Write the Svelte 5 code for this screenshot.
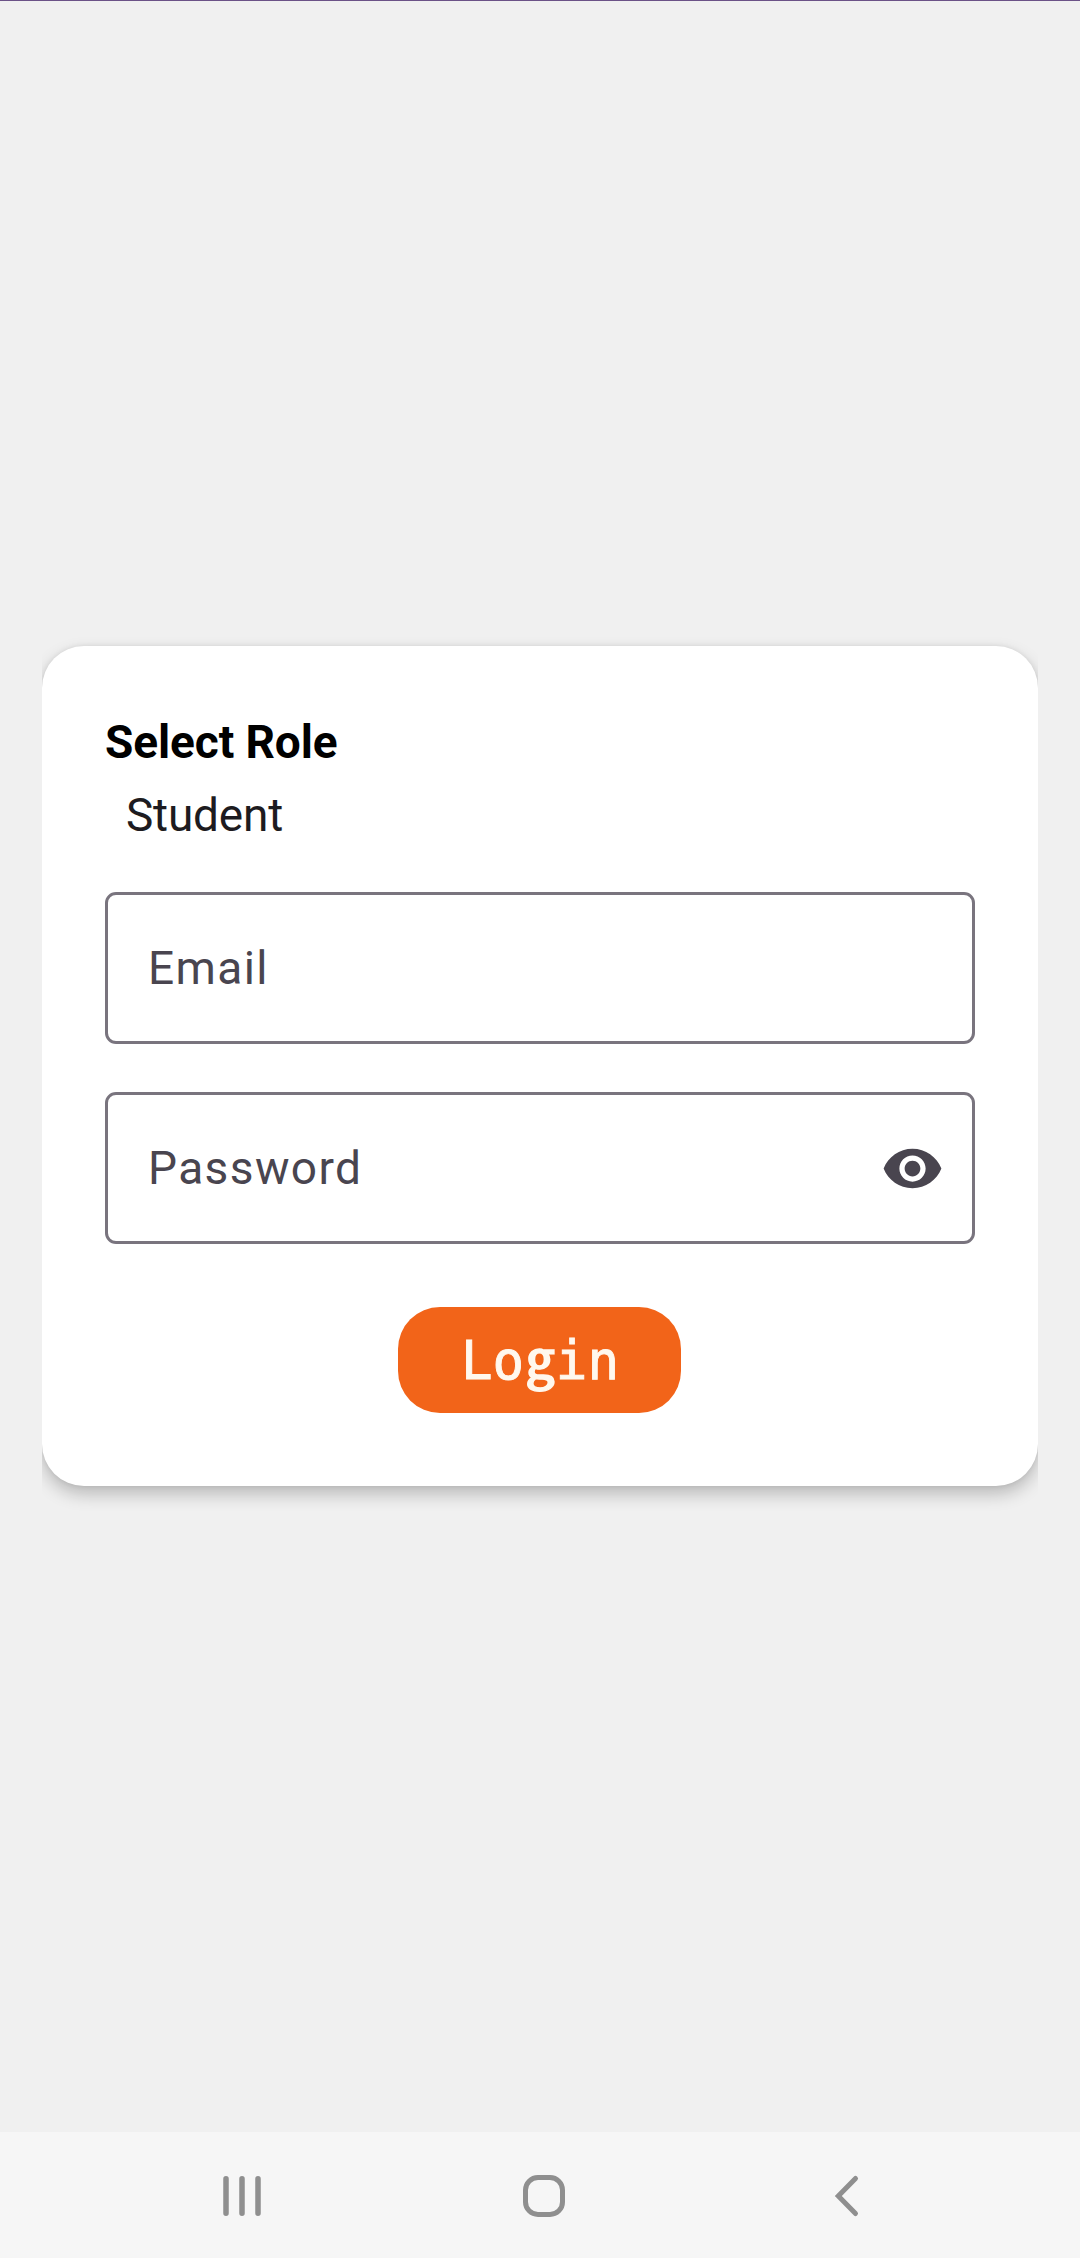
<script>
  let email = $state('');
  let password = $state('');
  let visible = $state(false);
</script>

<div class="screen">
  <main>
    <form class="card" onsubmit={(e) => e.preventDefault()}>
      <h1>Select Role</h1>
      <div class="role">Student</div>
      <label class="field">
        <input type="text" placeholder="Email" bind:value={email} />
      </label>
      <div class="field">
        <input type={visible ? 'text' : 'password'} placeholder="Password" bind:value={password} />
        <button class="eye" type="button" aria-label="Show password" onclick={() => (visible = !visible)}>
          <svg viewBox="0 0 24 24" width="63" height="63">
            <path fill="#49454f" d="M12 4.5C7 4.5 2.73 7.61 1 12c1.73 4.39 6 7.5 11 7.5s9.27-3.11 11-7.5c-1.73-4.39-6-7.5-11-7.5zM12 17c-2.76 0-5-2.24-5-5s2.24-5 5-5 5 2.24 5 5-2.24 5-5 5zm0-8c-1.66 0-3 1.34-3 3s1.34 3 3 3 3-1.34 3-3-1.34-3-3-3z" />
          </svg>
        </button>
      </div>
      <button class="login" type="submit">Lo<span class="g">g</span>in</button>
    </form>
  </main>

  <nav>
    <svg viewBox="0 0 48 48" width="48" height="48">
      <path d="M8 6.8v34.4M24 6.8v34.4M40 6.8v34.4" stroke-width="5.5" />
    </svg>
    <svg viewBox="0 0 48 48" width="48" height="48">
      <rect x="5.5" y="5.5" width="37" height="37" rx="12.5" stroke-width="5" />
    </svg>
    <svg viewBox="0 0 48 48" width="48" height="48">
      <path d="M32.5 6.5L15.3 24l17.2 17.5" stroke-width="5" stroke-linejoin="miter" />
    </svg>
  </nav>
</div>

<style>
  :global(body) {
    margin: 0;
  }
  .screen {
    box-sizing: border-box;
    height: 2258px;
    display: flex;
    flex-direction: column;
    background: linear-gradient(#6b5287 0 1px, #f0f0f0 1px);
    font-family: Roboto, sans-serif;
    font-size: 46px;
  }
  main {
    flex: 1;
    display: flex;
    align-items: center;
    padding: 0 42px;
  }
  .card {
    box-sizing: border-box;
    width: 100%;
    height: 840px;
    padding: 63px;
    display: flex;
    flex-direction: column;
    background: #fff;
    border-radius: 42px;
    box-shadow: 0 8px 17px rgba(0, 0, 0, 0.23), 0 0 5px rgba(0, 0, 0, 0.08);
    clip-path: inset(-50px 0);
  }
  h1 {
    margin: 0;
    font-size: inherit;
    font-weight: 700;
    line-height: 66px;
    letter-spacing: -0.1px;
    color: #000;
  }
  .role {
    padding-left: 21px;
    margin-bottom: 37px;
    line-height: 80px;
    letter-spacing: -0.2px;
    color: #1d1b20;
  }
  .field {
    box-sizing: border-box;
    height: 152px;
    margin-bottom: 48px;
    padding: 0 28px 0 40px;
    display: flex;
    align-items: center;
    border: 3px solid #79747e;
    border-radius: 11px;
  }
  input {
    flex: 1;
    min-width: 0;
    padding: 0;
    border: 0;
    outline: 0;
    background: none;
    font: inherit;
    letter-spacing: 1.4px;
    color: #1d1b20;
  }
  input::placeholder {
    color: #49454f;
    opacity: 1;
  }
  button {
    border: 0;
    padding: 0;
  }
  .eye {
    display: flex;
    background: none;
  }
  .login {
    box-sizing: border-box;
    align-self: center;
    width: 283px;
    height: 106px;
    margin: 15px 1px 0 0;
    padding: 2px 0 0 1px;
    border-radius: 42px;
    background: #f26419;
    color: #fff8ee;
    font: 400 52.5px/104px 'DejaVu Sans Mono', monospace;
    -webkit-text-stroke: 0.9px #fff8ee;
  }
  /* Double-storey g, widened to the pitch of its neighbours */
  .g {
    display: inline-block;
    width: 26.2px;
    margin: 0 2.7px;
    line-height: 1;
    font-family: 'Noto Sans Mono CJK SC', monospace;
    transform: scaleX(1.17);
    -webkit-text-stroke-width: 1.4px;
  }
  nav {
    height: 126px;
    box-sizing: border-box;
    padding: 0 82px 0 91px;
    display: grid;
    grid-template-columns: repeat(3, 1fr);
    align-items: center;
    justify-items: center;
    background: #f6f6f6;
  }
  nav svg {
    margin-top: 2px;
    fill: none;
    stroke: #8f8f8f;
    stroke-linecap: round;
  }
</style>
